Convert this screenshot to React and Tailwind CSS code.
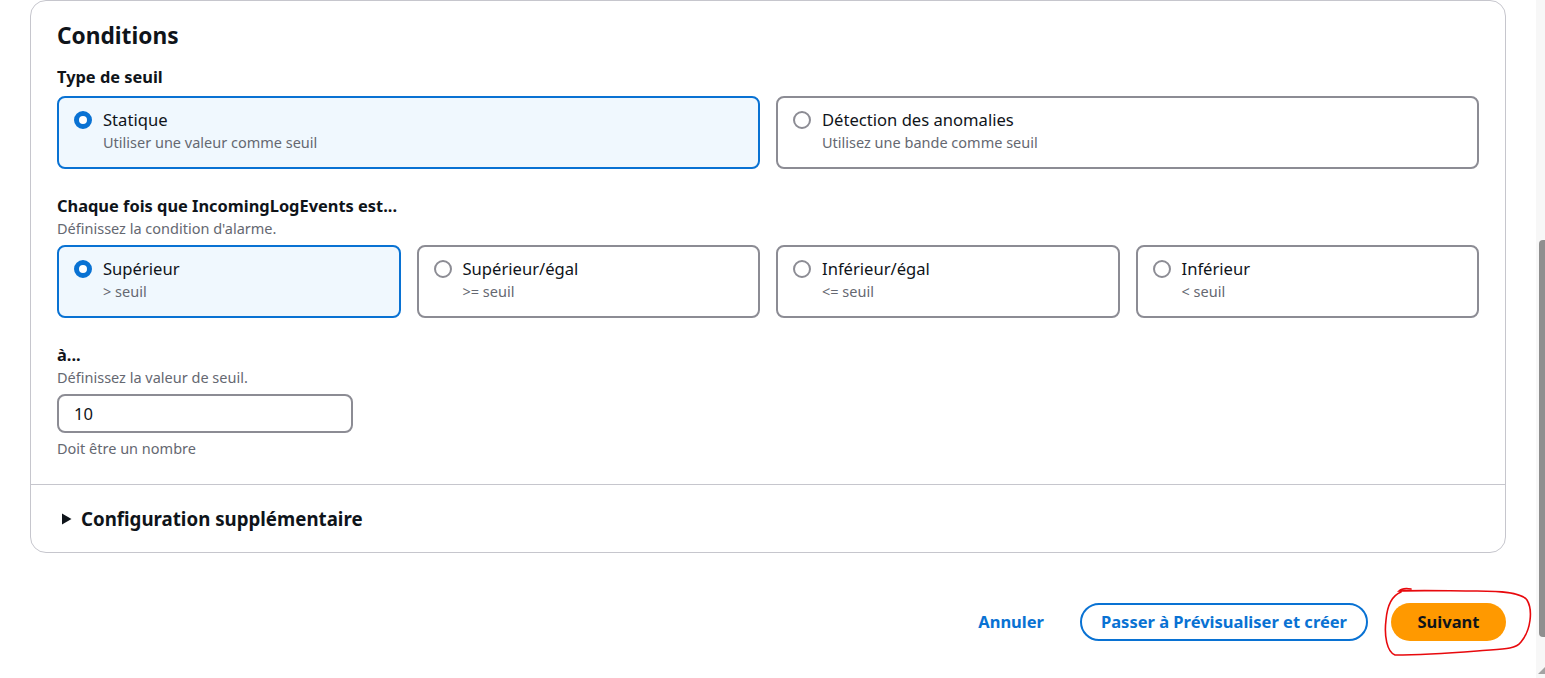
import { useState } from 'react'

const FONT = { fontFamily: '"Noto Sans", "Open Sans", Arial, sans-serif' }

function Radio({ checked }) {
  return checked ? (
    <span className="mt-[2px] h-[18px] w-[18px] shrink-0 rounded-full border-[5px] border-[#0972d3] bg-white" />
  ) : (
    <span className="mt-[2px] h-[18px] w-[18px] shrink-0 rounded-full border-2 border-[#8c8c94] bg-white" />
  )
}

function Tile({ checked, label, desc, onClick }) {
  return (
    <button
      type="button"
      onClick={onClick}
      className={
        checked
          ? 'flex h-[73px] items-start gap-[11px] rounded-lg border-2 border-[#0972d3] bg-[#f0f8fe] px-[15px] pt-[11px] text-left'
          : 'flex h-[73px] items-start gap-[11px] rounded-lg border-2 border-[#8c8c94] bg-white px-[15px] pt-[11px] text-left'
      }
    >
      <Radio checked={checked} />
      <div className="flex flex-col">
        <span className="text-[16.6px] leading-[22px] text-[#0f141a]">{label}</span>
        <span className="text-[14.5px] leading-[22px] text-[#656871]">{desc}</span>
      </div>
    </button>
  )
}

const TYPES = [
  { label: 'Statique', desc: 'Utiliser une valeur comme seuil' },
  { label: 'Détection des anomalies', desc: 'Utilisez une bande comme seuil' },
]

const OPS = [
  { label: 'Supérieur', desc: '> seuil' },
  { label: 'Supérieur/égal', desc: '>= seuil' },
  { label: 'Inférieur/égal', desc: '<= seuil' },
  { label: 'Inférieur', desc: '< seuil' },
]

export default function App() {
  const [type, setType] = useState(0)
  const [op, setOp] = useState(0)
  const [value, setValue] = useState('10')

  return (
    <div className="relative flex h-[678px] w-full overflow-hidden bg-white text-[#0f141a]" style={FONT}>
      {/* page content */}
      <div className="flex-1 pl-[30px] pr-[30px]">
        <div className="rounded-2xl border border-[#c6c6cd] bg-white">
          <div className="px-[26px] pt-[20px] pb-[26px]">
            <h2 className="text-[22.7px] font-bold leading-[30px]">Conditions</h2>

            <div className="mt-[16px] text-[16.4px] font-bold leading-[20px]">Type de seuil</div>
            <div className="mt-[9px] grid grid-cols-2 gap-[16px]">
              {TYPES.map((t, i) => (
                <Tile key={t.label} checked={type === i} label={t.label} desc={t.desc} onClick={() => setType(i)} />
              ))}
            </div>

            <div className="mt-[27px] text-[16.4px] font-bold leading-[20px]">Chaque fois que IncomingLogEvents est...</div>
            <div className="mt-[2px] text-[14.5px] leading-[20px] text-[#656871]">Définissez la condition d'alarme.</div>
            <div className="mt-[7px] grid grid-cols-4 gap-[16px]">
              {OPS.map((o, i) => (
                <Tile key={o.label} checked={op === i} label={o.label} desc={o.desc} onClick={() => setOp(i)} />
              ))}
            </div>

            <div className="mt-[27px] text-[16.4px] font-bold leading-[20px]">à...</div>
            <div className="mt-[2px] text-[14.5px] leading-[20px] text-[#656871]">Définissez la valeur de seuil.</div>
            <input
              value={value}
              onChange={(e) => setValue(e.target.value)}
              className="mt-[7px] block h-[39px] w-[296px] rounded-lg border-2 border-[#8c8c94] px-[15px] text-[16.6px] text-[#0f141a] outline-none"
            />
            <div className="mt-[5px] text-[14.5px] leading-[20px] text-[#656871]">Doit être un nombre</div>
          </div>

          <div className="flex h-[68px] items-center gap-[9px] border-t border-[#c6c6cd] px-[30px]">
            <svg width="11" height="12" viewBox="0 0 11 12">
              <path d="M1 0.5 L10.5 6 L1 11.5 Z" fill="#0f141a" />
            </svg>
            <span className="text-[18.7px] font-bold leading-[24px]">Configuration supplémentaire</span>
          </div>
        </div>

        {/* actions */}
        <div className="mt-[50px] flex items-center justify-end">
          <button type="button" className="text-[16.5px] font-bold text-[#0972d3]">Annuler</button>
          <button
            type="button"
            className="ml-[36px] h-[38px] w-[288px] rounded-full border-2 border-[#0972d3] text-[16.5px] font-bold text-[#0972d3]"
          >
            Passer à Prévisualiser et créer
          </button>
          <div className="relative ml-[23px]">
            <button
              type="button"
              className="h-[38px] w-[115px] rounded-full bg-[#ff9900] text-[16.5px] font-bold text-[#0f141a]"
            >
              Suivant
            </button>
            {/* hand-drawn annotation */}
            <svg
              className="pointer-events-none absolute left-[-10px] top-[-17px]"
              width="160"
              height="72"
              viewBox="0 0 160 72"
              fill="none"
            >
              <path
                d="M30 3 C24 2 20 3 18 5 C40 4 70 5 96 5 C118 5 140 6 146 14 C152 24 150 44 140 56 C134 64 120 63 96 65 C70 67 40 69 14 69 C6 66 3 50 5 34 C6 22 10 10 20 6"
                stroke="#e8090d"
                strokeWidth="1.6"
                strokeLinecap="round"
              />
            </svg>
          </div>
        </div>
      </div>

      {/* scrollbar */}
      <div className="relative w-[9px] shrink-0 bg-[#f7f7f7]">
        <div className="absolute left-[3px] top-[240px] h-[397px] w-[6px] rounded-l-sm bg-[#8f8f8f]" />
        <svg className="absolute bottom-[4px] left-[2px]" width="7" height="7" viewBox="0 0 7 7">
          <path d="M7 0 L7 7 L0 7 Z" fill="#a3a3a3" />
        </svg>
      </div>
    </div>
  )
}
